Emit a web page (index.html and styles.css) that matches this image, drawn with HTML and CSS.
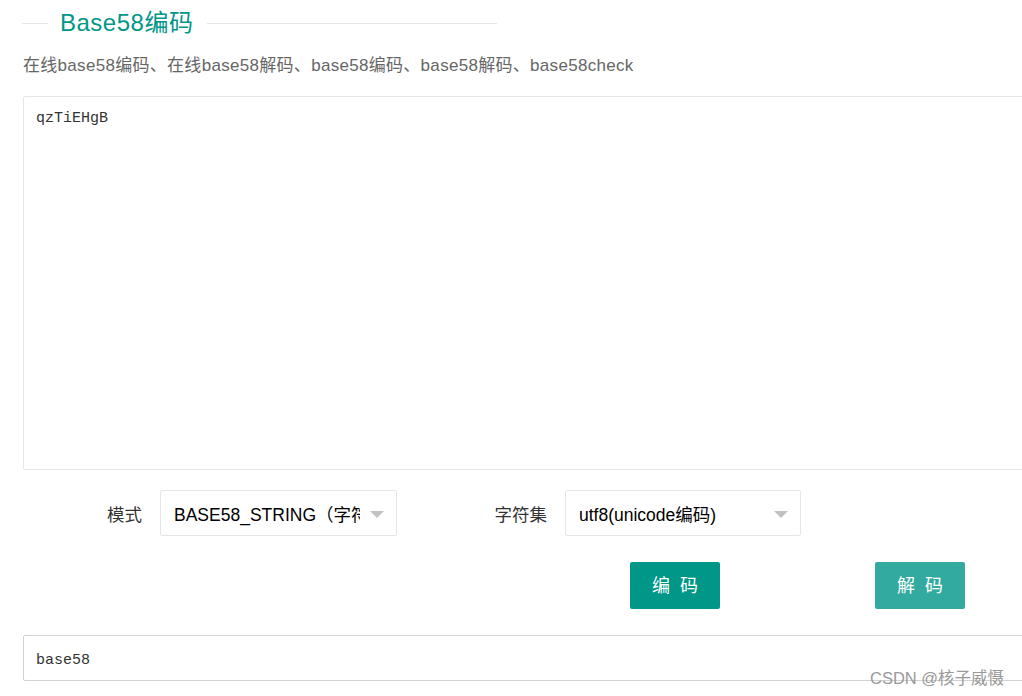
FILE: index.html
```html
<!DOCTYPE html>
<html lang="zh-CN">
<head>
  <meta charset="UTF-8">
  <meta name="viewport" content="width=device-width, initial-scale=1.0">
  <title>Base58编码</title>
  <link rel="stylesheet" href="styles.css">
</head>
<body>
  <div class="page">
    <div class="legend">
      <span class="legend-line short"></span>
      <h1>Base58编码</h1>
      <span class="legend-line long"></span>
    </div>
    <p class="subtitle">在线base58编码、在线base58解码、base58编码、base58解码、base58check</p>

    <textarea class="source" spellcheck="false">qzTiEHgB</textarea>

    <div class="form-row">
      <label class="label first">模式</label>
      <div class="select mode">
        <span class="select-text">BASE58_STRING（字符串）</span>
        <i class="arrow"></i>
      </div>
      <label class="label second">字符集</label>
      <div class="select charset">
        <span class="select-text">utf8(unicode编码)</span>
        <i class="arrow"></i>
      </div>
    </div>

    <div class="btn-row">
      <button class="btn">编 码</button>
      <button class="btn light">解 码</button>
    </div>

    <input class="result" type="text" value="base58" spellcheck="false">
  </div>
  <div class="watermark">CSDN @核子威慑</div>
</body>
</html>
```

FILE: styles.css
```css
body {
  margin: 0;
  background: #fff;
  overflow: hidden;
  font-family: "Liberation Sans", Arial, "Noto Sans CJK SC", sans-serif;
  color: #333;
}

.page {
  width: 1100px;
  padding-left: 23px;
}

.legend {
  display: flex;
  align-items: center;
  height: 46px;
}

.legend-line {
  height: 1px;
  background: #e6e6e6;
}

.legend-line.short {
  width: 26px;
  margin-left: -1px;
  margin-right: 12px;
}

.legend-line.long {
  width: 290px;
  margin-left: 14px;
}

.legend h1 {
  margin: 0;
  font-size: 24px;
  font-weight: normal;
  letter-spacing: 0.5px;
  color: #009688;
  line-height: 30px;
}

.subtitle {
  margin: 8px 0 0;
  font-size: 17px;
  letter-spacing: 0.3px;
  line-height: 24px;
  color: #666;
}

.source {
  display: block;
  box-sizing: border-box;
  width: 1100px;
  height: 374px;
  margin-top: 18px;
  padding: 12px 12px;
  border: 1px solid #e6e6e6;
  border-radius: 2px;
  resize: none;
  outline: none;
  font-family: "Liberation Mono", "Noto Sans CJK SC", monospace;
  font-size: 15px;
  line-height: 20px;
  color: #333;
}

.form-row {
  display: flex;
  align-items: center;
  margin-top: 20px;
  height: 46px;
}

.label {
  box-sizing: border-box;
  text-align: right;
  padding-right: 18px;
  font-size: 17.5px;
  color: #333;
}

.label.first {
  width: 137px;
}

.label.second {
  width: 168px;
}

.select {
  box-sizing: border-box;
  position: relative;
  height: 46px;
  border: 1px solid #e6e6e6;
  border-radius: 2px;
  display: flex;
  align-items: center;
  padding: 0 36px 0 13px;
  overflow: hidden;
}

.select.mode {
  width: 237px;
}

.select.charset {
  width: 236px;
}

.select-text {
  font-size: 17.5px;
  color: #000;
  white-space: nowrap;
  overflow: hidden;
}

.arrow {
  position: absolute;
  right: 12px;
  top: 20px;
  width: 0;
  height: 0;
  border-left: 7px solid transparent;
  border-right: 7px solid transparent;
  border-top: 7px solid #c2c2c2;
}

.btn-row {
  display: flex;
  gap: 155px;
  margin-top: 26px;
  padding-left: 607px;
}

.btn {
  width: 90px;
  height: 47px;
  padding: 0 0 4px 3px;
  border: none;
  border-radius: 2px;
  background: #009688;
  color: #fff;
  font-family: "Noto Sans CJK SC", sans-serif;
  font-size: 18px;
  letter-spacing: 3px;
  cursor: pointer;
}

.btn.light {
  opacity: 0.8;
}

.result {
  display: block;
  box-sizing: border-box;
  width: 1100px;
  height: 46px;
  margin-top: 26px;
  padding: 5px 12px 0;
  border: 1px solid #d2d2d2;
  border-radius: 2px;
  outline: none;
  font-family: "Liberation Mono", monospace;
  font-size: 15px;
  color: #333;
}

.watermark {
  position: absolute;
  left: 870px;
  top: 667px;
  font-size: 16.5px;
  line-height: 22px;
  color: #999;
  white-space: nowrap;
}
```
